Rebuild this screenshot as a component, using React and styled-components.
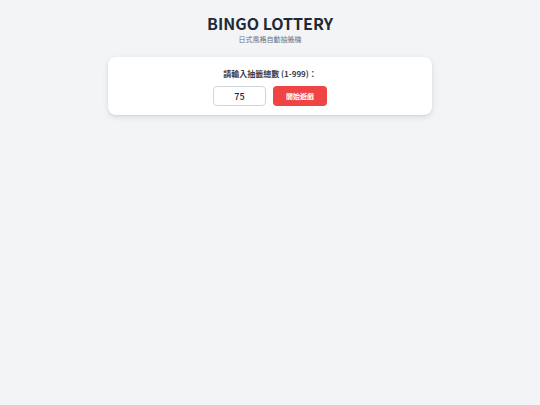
import React, { useState } from 'react'
import styled, { createGlobalStyle } from 'styled-components'

const GlobalStyle = createGlobalStyle`
    html, body {
        margin: 0;
        padding: 0;
        background-color: #f3f4f6;
        font-family: "Noto Sans CJK TC", "Noto Sans", sans-serif;
    }
`
const Page = styled.div`
    min-height: 405px;
    display: flex;
    flex-direction: column;
    align-items: center;
    padding-top: 12px;
    box-sizing: border-box;
`
const Title = styled.h1`
    font-size: 16px;
    font-weight: 700;
    color: #1f2937;
    margin: 0;
    line-height: 22px;
`
const Subtitle = styled.p`
    font-size: 7px;
    color: #6b7280;
    margin: 0;
    line-height: 10px;
`
const Card = styled.div`
    width: 324px;
    height: 58px;
    margin-top: 13px;
    background-color: white;
    border-radius: 8px;
    box-shadow: 0 2px 6px rgba(0, 0, 0, 0.1), 0 1px 2px rgba(0, 0, 0, 0.06);
    display: flex;
    flex-direction: column;
    align-items: center;
    padding-top: 11px;
    box-sizing: border-box;
`
const Label = styled.label`
    font-size: 8px;
    font-weight: 700;
    color: #374151;
    line-height: 12px;
`
const Row = styled.div`
    display: flex;
    gap: 7px;
    margin-top: 6px;
`
const NumberInput = styled.input`
    width: 53px;
    height: 20px;
    box-sizing: border-box;
    border: 1px solid #d1d5db;
    border-radius: 4px;
    text-align: center;
    font-size: 9px;
    font-weight: 500;
    font-family: "Noto Sans CJK TC", sans-serif;
    color: #1f2937;
    outline: none;
    padding: 0;
`
const StartBtn = styled.button`
    width: 54px;
    height: 20px;
    border: none;
    border-radius: 4px;
    background-color: #ef4444;
    color: white;
    font-size: 7px;
    font-weight: 700;
    font-family: "Noto Sans CJK TC", sans-serif;
    cursor: pointer;
    padding: 0;
    :hover {
        background-color: #dc2626;
    }
`

const App = () => {
    const [total, setTotal] = useState('75')
    return (
        <Page>
            <GlobalStyle />
            <Title>BINGO LOTTERY</Title>
            <Subtitle>日式風格自動抽籤機</Subtitle>
            <Card>
                <Label>請輸入抽籤總數 (1-999)：</Label>
                <Row>
                    <NumberInput value={total} onChange={(e) => setTotal(e.target.value)} />
                    <StartBtn>開始遊戲</StartBtn>
                </Row>
            </Card>
        </Page>
    )
}
export default App
